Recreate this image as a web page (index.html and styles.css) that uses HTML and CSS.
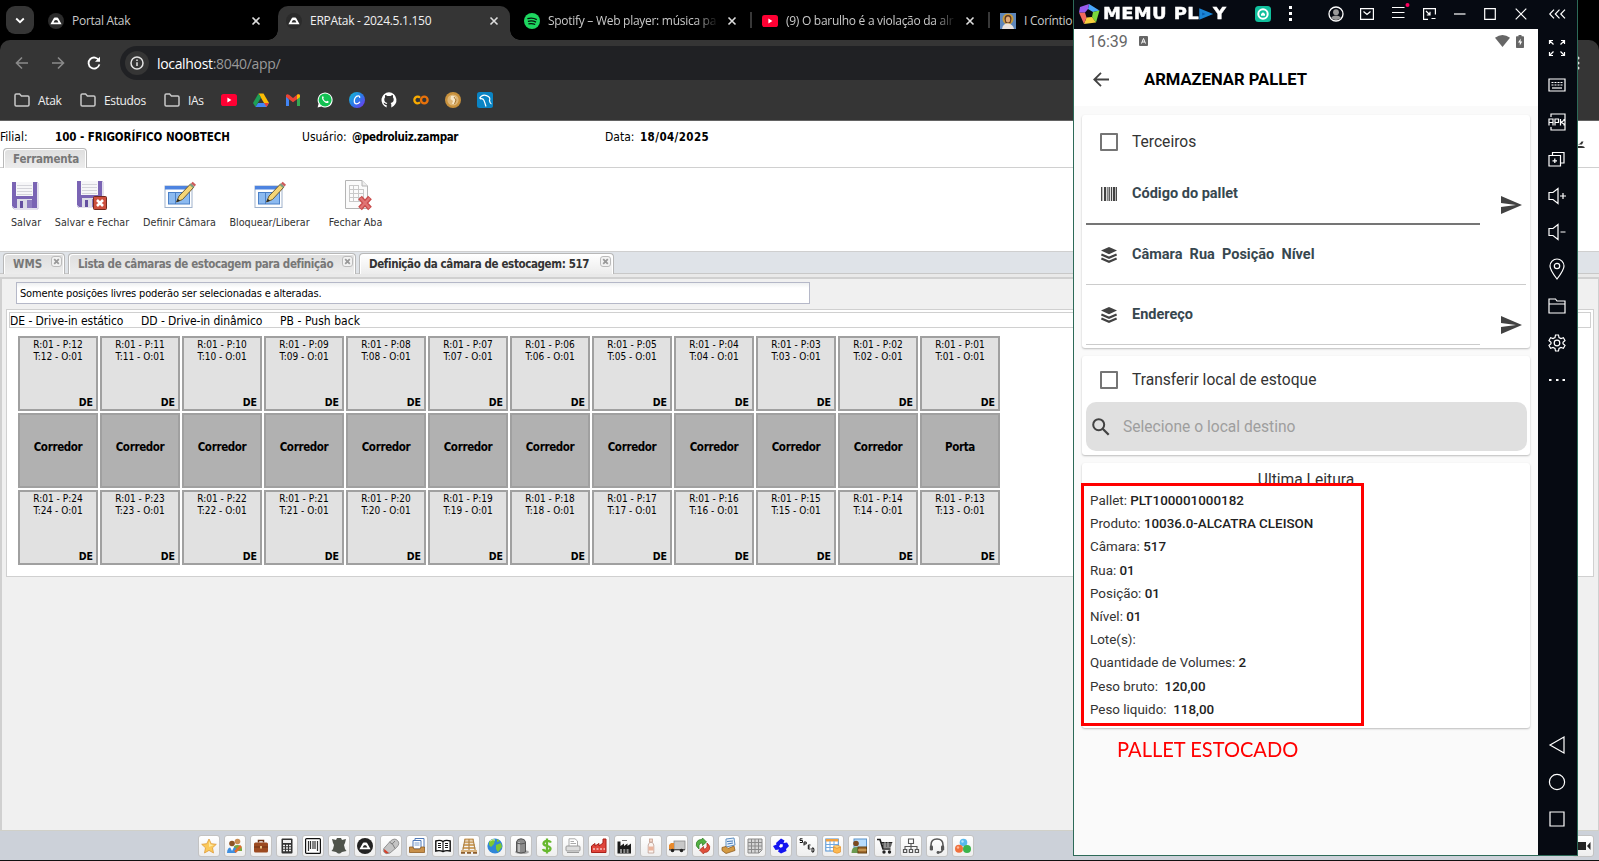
FILE: index.html
```html
<!DOCTYPE html>
<html lang="pt-BR">
<head>
<meta charset="utf-8">
<title>ERPAtak - 2024.5.1.150</title>
<link rel="stylesheet" href="styles.css">
</head>
<body>
<svg width="0" height="0" class="defs">
  <symbol id="x" viewBox="0 0 10 10"><path d="M1.5 1.5l7 7M8.5 1.5l-7 7" stroke="currentColor" stroke-width="1.6" fill="none"/></symbol>
  <symbol id="atak" viewBox="0 0 16 16"><circle cx="8" cy="8" r="8" fill="#2b2b2b"/><path d="M2.400 11.200 5.600 5.400Q6 4.600 7 4.600H9Q10 4.600 10.400 5.400L13.600 11.200Z" fill="#fff"/><path d="M5.600 9.400Q6.300 7 8 7T10.400 9.400Z" fill="#2b2b2b"/></symbol>
  <symbol id="folder" viewBox="0 0 16 14"><path d="M1 2.2Q1 1 2.2 1H5.6L7.4 3H13.8Q15 3 15 4.2V11.8Q15 13 13.8 13H2.2Q1 13 1 11.8Z" fill="none" stroke="#c7c7c7" stroke-width="1.5"/></symbol>
  <symbol id="yt" viewBox="0 0 16 12"><rect width="16" height="12" rx="2.6" fill="#ff0033"/><path d="M6.4 3.6v4.8L10.4 6Z" fill="#fff"/></symbol>
  <symbol id="tabx" viewBox="0 0 11 11"><rect x=".5" y=".5" width="10" height="10" rx="2.5" fill="#f2f2f2" stroke="#bbb"/><path d="M3.2 3.2l4.6 4.6M7.8 3.2L3.2 7.8" stroke="#999" stroke-width="1.8"/></symbol>
  <symbol id="floppy" viewBox="0 0 28 28"><path d="M1 1H26V27H3L1 25Z" fill="#7a64b4"/><path d="M26 1l1 1v26H3l-2-2" fill="none" stroke="#c9c3dc"/><rect x="5" y="1" width="17" height="14" fill="#f6f6f8"/><path d="M6 4.5H21M6 7.5H21M6 10.500H21M6 13.500H21" stroke="#d4d4da"/><rect x="6" y="18" width="15" height="9" fill="#dcdce6"/><rect x="9" y="20" width="3" height="7" fill="#6450a0"/><rect x="16" y="19" width="5" height="8" fill="#8d7cc0"/></symbol>
  <symbol id="edit" viewBox="0 0 32 28"><rect x="1" y="5" width="27" height="21.500" fill="#fff" stroke="#9fb2cc"/><rect x="1" y="5" width="27" height="3.500" fill="#4d83e0"/><rect x="4.500" y="11.500" width="21" height="11.500" fill="#8cbaf0" stroke="#4a80c8"/><path d="M11.500 11.500V23" stroke="#4a80c8"/><path d="M12.500 21 15 15 26.500 3 30 6 18.500 18.500Z" fill="#f6d575" stroke="#6d5a30"/><path d="M12.500 21 13.800 17.800 16 19.800Z" fill="#222"/><path d="M25.500 4 27 2.500 30.500 5.500 29 7Z" fill="#7f9f80"/><path d="M27 2.500 28.700 .8 32 3.800 30.500 5.500Z" fill="#cc5b5b"/></symbol>
  <symbol id="send" viewBox="0 0 21 18"><path d="M0 0 21 9 0 18V11L15 9 0 7Z" fill="#424242"/></symbol>
  <symbol id="layers" viewBox="0 0 16 16"><path d="M8 0 16 3.600 8 7.200 0 3.600Z" fill="#424242"/><path d="M.4 7.400 8 10.800 15.600 7.400M.4 11.400 8 14.800 15.600 11.400" stroke="#424242" stroke-width="2.200" fill="none"/></symbol>
</svg>

<div class="browser">
  <div class="tabstrip">
    <span class="tabmenu"><svg width="10" height="7" viewBox="0 0 10 7"><path d="M1.200 1.500 5 5.200 8.800 1.500" stroke="#fff" stroke-width="1.800" fill="none"/></svg></span>
    <div class="tab first"><svg width="16" height="16"><use href="#atak"/></svg><span class="ttl">Portal Atak</span><svg class="cx" width="10" height="10"><use href="#x"/></svg></div>
    <div class="tab active"><svg width="16" height="16"><use href="#atak"/></svg><span class="ttl">ERPAtak - 2024.5.1.150</span><svg class="cx" width="10" height="10"><use href="#x"/></svg></div>
    <div class="tab"><svg width="16" height="16" viewBox="0 0 16 16"><circle cx="8" cy="8" r="8" fill="#1ed760"/><path d="M3.400 5.700Q8.500 4.300 12.800 6.600M3.900 8.400Q8.200 7.200 12 9.100M4.400 10.900Q8 10 11.200 11.500" stroke="#04120a" stroke-width="1.300" fill="none"/></svg><span class="ttl fade">Spotify – Web player: música pa</span><svg class="cx" width="10" height="10"><use href="#x"/></svg></div>
    <i class="tsep"></i>
    <div class="tab"><svg width="16" height="12"><use href="#yt"/></svg><span class="ttl fade">(9) O barulho é a violação da alr</span><svg class="cx" width="10" height="10"><use href="#x"/></svg></div>
    <i class="tsep"></i>
    <div class="tab last"><svg width="16" height="16" viewBox="0 0 16 16"><rect width="16" height="16" fill="#5d86bb"/><circle cx="8" cy="6" r="5.500" fill="#c79a3c"/><path d="M4.500 6Q4.500 2 8 2T11.500 6L10.500 10H5.500Z" fill="#5c3620"/><ellipse cx="8" cy="6.500" rx="2.200" ry="3" fill="#e0aa78"/><path d="M2 16Q3 10 8 10.500T14 16Z" fill="#e9e1dc"/></svg><span class="ttl">I Coríntio</span></div>
  </div>
  <div class="navbar">
    <svg width="14" height="14" viewBox="0 0 14 14"><path d="M13 7H1.500M7 1.500 1.500 7 7 12.500" stroke="#8a8a8a" stroke-width="1.600" fill="none"/></svg>
    <svg width="14" height="14" viewBox="0 0 14 14"><path d="M1 7H12.500M7 1.500 12.500 7 7 12.500" stroke="#8a8a8a" stroke-width="1.600" fill="none"/></svg>
    <svg width="14" height="14" viewBox="0 0 14 14"><path d="M12 4.600A5.500 5.500 0 1 0 12.400 8.400" stroke="#fff" stroke-width="1.800" fill="none"/><path d="M13 .8V5.800H8Z" fill="#fff"/></svg>
    <div class="omni"><span class="info"><svg width="14" height="14" viewBox="0 0 14 14"><circle cx="7" cy="7" r="6" stroke="#e3e3e3" stroke-width="1.500" fill="none"/><path d="M7 6.200V10M7 3.600V5" stroke="#e3e3e3" stroke-width="1.500"/></svg></span><span class="url"><b>localhost</b>:8040/app/</span></div>
    <svg class="kebab" width="4" height="14" viewBox="0 0 4 14"><circle cx="2" cy="2" r="1.500" fill="#ddd"/><circle cx="2" cy="7" r="1.500" fill="#ddd"/><circle cx="2" cy="12" r="1.500" fill="#ddd"/></svg>
  </div>
  <div class="bookmarks">
    <span class="bm w1"><svg width="16" height="14"><use href="#folder"/></svg>Atak</span>
    <span class="bm w2"><svg width="16" height="14"><use href="#folder"/></svg>Estudos</span>
    <span class="bm w3"><svg width="16" height="14"><use href="#folder"/></svg>IAs</span>
    <span class="favs">
      <svg width="16" height="12"><use href="#yt"/></svg>
      <svg width="16" height="16" viewBox="0 0 16 16"><path d="M5.500 1.500H10.500L16 11H11Z" fill="#fbbc04"/><path d="M5.500 1.500 0 11 2.500 15 8 5.600Z" fill="#1e9e54"/><path d="M5 11H16L13.500 15H2.500Z" fill="#4285f4"/><path d="M11 11H16L13.500 15Z" fill="#ea4335"/></svg>
      <svg width="16" height="14" viewBox="0 0 16 14"><path d="M1 3V13H4V6.500Z" fill="#4285f4"/><path d="M15 3V13H12V6.500Z" fill="#34a853"/><path d="M1 4V2.200Q2 .5 4 1.800L8 5 12 1.800Q14 .5 15 2.200V4L8 9.300Z" fill="#ea4335"/><path d="M12 1.800Q14 .5 15 2.200V4L12 6.500Z" fill="#fbbc04"/></svg>
      <svg width="16" height="16" viewBox="0 0 16 16"><path d="M.6 15.600 1.600 11.800A7.500 7.500 0 1 1 4.400 14.600Z" fill="#fff"/><circle cx="8.100" cy="7.900" r="6.500" fill="#12c152"/><path d="M5.200 4.600Q6.200 3.800 6.700 5.400L6.300 6.700Q7 8.600 9.200 9.500L10.300 8.700Q12.200 9.300 11.600 10.200 10.500 12 7.800 10.200 4.300 7.700 5.200 4.600Z" fill="#fff"/></svg>
      <svg width="16" height="16" viewBox="0 0 16 16"><defs><linearGradient id="cv" x1="0" y1="0" x2="1" y2="1"><stop offset="0" stop-color="#12bfd0"/><stop offset=".5" stop-color="#2a7ae8"/><stop offset="1" stop-color="#7b2ff0"/></linearGradient></defs><circle cx="8" cy="8" r="8" fill="url(#cv)"/><path d="M10.600 5.800Q11 3.800 9.200 3.900C6.500 4 5.200 7 5.300 9.300 5.500 12.800 9.300 12.600 10.900 9.800" stroke="#fff" stroke-width="1.300" fill="none"/></svg>
      <svg width="16" height="16" viewBox="0 0 16 16"><path d="M8 .2A7.900 7.900 0 0 0 5.600 15.500V13Q3.800 13.400 3.200 12L2.400 10.800Q4 10.600 4.600 11.800L5.800 12Q5.800 11.200 6.400 10.900C4 10.600 3.300 9.400 3.300 7.200Q3.300 6 4.100 5.200 3.800 4.200 4.200 3.100 5 3 6.400 4H9.600Q11 3 11.800 3.100 12.200 4.200 11.900 5.200 12.700 6 12.700 7.200C12.700 9.400 12 10.600 9.600 10.900Q10.300 11.500 10.300 12.500V15.500A7.900 7.900 0 0 0 8 .2Z" fill="#fff"/></svg>
      <svg width="16" height="10" viewBox="0 0 16 10"><path d="M7 2.700A3.300 3.300 0 1 0 7 7.300" stroke="#f9ab00" stroke-width="2.300" fill="none"/><circle cx="11.300" cy="5" r="3.300" stroke="#e8710a" stroke-width="2.300" fill="none"/></svg>
      <svg width="16" height="16" viewBox="0 0 16 16"><circle cx="8" cy="8" r="8" fill="#c8913c"/><circle cx="8" cy="8" r="5.600" fill="#ddb678"/><path d="M6 4Q9 3 11 6L10 12H7L8 9 5.500 7Z" fill="#f6e6c6"/><path d="M9 5 11 8 9.500 12" stroke="#a3702a" fill="none"/></svg>
      <svg width="16" height="16" viewBox="0 0 16 16"><rect width="16" height="16" rx="2.500" fill="#0a84c4"/><path d="M2.500 6.500Q5 2 9.500 3.600T12.500 8.600Q13 11.500 14.500 12M3 6.800Q6 6 7 8.500T9 14.500" stroke="#fff" stroke-width="1.200" fill="none"/></svg>
    </span>
  </div>

  <div class="info-row"><span class="c1">Filial:</span><b class="c2">100 - FRIGORÍFICO NOOBTECH</b><span class="c3">Usuário:</span><b class="c4">@pedroluiz.zampar</b><span class="c5">Data:</span><b class="c6">18/04/2025</b>
    <svg class="edge" width="9" height="12" viewBox="0 0 9 12"><path d="M0 3.500Q3 3.500 4.500 .5H6.500L5 3.500ZM0 5H4.500Q8 5 8 8V12H4V9H0Z" fill="#333"/></svg></div>
  <div class="ribbon-tabs"><span class="etab">Ferramenta</span></div>
  <div class="ribbon">
    <div class="rb r1"><svg width="28" height="28"><use href="#floppy"/></svg><span>Salvar</span></div>
    <div class="rb r2"><svg width="32" height="30" viewBox="0 0 32 30"><use href="#floppy" width="28" height="28"/><rect x="17.500" y="16.500" width="13" height="13" rx="1" fill="#cd4f3d" stroke="#70281e"/><path d="M21 20l6 6M27 20l-6 6" stroke="#fff" stroke-width="2.600"/></svg><span>Salvar e Fechar</span></div>
    <div class="rb r3"><svg width="32" height="28"><use href="#edit"/></svg><span>Definir Câmara</span></div>
    <div class="rb r4"><svg width="32" height="28"><use href="#edit"/></svg><span>Bloquear/Liberar</span></div>
    <div class="rb r5"><svg width="28" height="30" viewBox="0 0 28 30"><path d="M1.500 .5H18L23.500 6V28.500H1.500Z" fill="#fbfbfb" stroke="#b4b4b4"/><path d="M18 .5V6H23.500" fill="#eee" stroke="#b4b4b4"/><path d="M5 5.500H15M5 9.500H20M5 13.500H20M5 17.500H20M5 21.500H16M5.500 5V22M9.500 5V22M14.500 5V22M19.500 9V18" stroke="#c9c9c9"/><path d="M16 17.500l10 11M26 17.500l-10 11" stroke="#c94c4c" stroke-width="5"/><path d="M16.500 18l9 10M25.500 18l-9 10" stroke="#e07575" stroke-width="2.400"/></svg><span>Fechar Aba</span></div>
  </div>
  <div class="page-tabs">
    <span class="etab t1">WMS<svg width="11" height="11"><use href="#tabx"/></svg></span>
    <span class="etab t2"><em>Lista de câmaras de estocagem para definição</em><svg width="11" height="11"><use href="#tabx"/></svg></span>
    <span class="etab t3"><em>Definição da câmara de estocagem: 517</em><svg width="11" height="11"><use href="#tabx"/></svg></span>
  </div>
  <div class="strip"></div>
  <div class="panel">
    <div class="field">Somente posições livres poderão ser selecionadas e alteradas.</div>
    <div class="sheet">
      <div class="legend"><span class="l1">DE - Drive-in estático</span><span class="l2">DD - Drive-in dinâmico</span><span class="l3">PB - Push back</span></div>
      <div class="grid">
        <div class="cell">R:01 - P:12<br>T:12 - O:01<b>DE</b></div><div class="cell">R:01 - P:11<br>T:11 - O:01<b>DE</b></div><div class="cell">R:01 - P:10<br>T:10 - O:01<b>DE</b></div><div class="cell">R:01 - P:09<br>T:09 - O:01<b>DE</b></div><div class="cell">R:01 - P:08<br>T:08 - O:01<b>DE</b></div><div class="cell">R:01 - P:07<br>T:07 - O:01<b>DE</b></div><div class="cell">R:01 - P:06<br>T:06 - O:01<b>DE</b></div><div class="cell">R:01 - P:05<br>T:05 - O:01<b>DE</b></div><div class="cell">R:01 - P:04<br>T:04 - O:01<b>DE</b></div><div class="cell">R:01 - P:03<br>T:03 - O:01<b>DE</b></div><div class="cell">R:01 - P:02<br>T:02 - O:01<b>DE</b></div><div class="cell">R:01 - P:01<br>T:01 - O:01<b>DE</b></div>
        <div class="aisle">Corredor</div><div class="aisle">Corredor</div><div class="aisle">Corredor</div><div class="aisle">Corredor</div><div class="aisle">Corredor</div><div class="aisle">Corredor</div><div class="aisle">Corredor</div><div class="aisle">Corredor</div><div class="aisle">Corredor</div><div class="aisle">Corredor</div><div class="aisle">Corredor</div><div class="aisle">Porta</div>
        <div class="cell">R:01 - P:24<br>T:24 - O:01<b>DE</b></div><div class="cell">R:01 - P:23<br>T:23 - O:01<b>DE</b></div><div class="cell">R:01 - P:22<br>T:22 - O:01<b>DE</b></div><div class="cell">R:01 - P:21<br>T:21 - O:01<b>DE</b></div><div class="cell">R:01 - P:20<br>T:20 - O:01<b>DE</b></div><div class="cell">R:01 - P:19<br>T:19 - O:01<b>DE</b></div><div class="cell">R:01 - P:18<br>T:18 - O:01<b>DE</b></div><div class="cell">R:01 - P:17<br>T:17 - O:01<b>DE</b></div><div class="cell">R:01 - P:16<br>T:16 - O:01<b>DE</b></div><div class="cell">R:01 - P:15<br>T:15 - O:01<b>DE</b></div><div class="cell">R:01 - P:14<br>T:14 - O:01<b>DE</b></div><div class="cell">R:01 - P:13<br>T:13 - O:01<b>DE</b></div>
      </div>
    </div>
  </div>
  <div class="dock">
    <i><svg viewBox="0 0 16 16"><path d="M8 1 10.200 5.700 15.300 6.300 11.500 9.800 12.500 15 8 12.400 3.500 15 4.500 9.800.7 6.300 5.800 5.700Z" fill="#fbc95a" stroke="#dd9a3a" stroke-width=".8"/><path d="M8 3 9.500 6.500 13 7 8 9Z" fill="#fde9a0"/></svg></i>
    <i><svg viewBox="0 0 16 16"><circle cx="10.500" cy="3.500" r="2.800" fill="#c98d52"/><path d="M6 12Q6 7 10.500 7T15 11V13H6Z" fill="#7aa83c"/><circle cx="5" cy="5.500" r="2.800" fill="#8c5324"/><path d="M0 15Q0 9 5 9T9 12V15Z" fill="#3f8fe0"/><path d="M3 9 5 13 7 9Z" fill="#fff"/><path d="M8 14 14 8" stroke="#e06b2c" stroke-width="2.500"/></svg></i>
    <i><svg viewBox="0 0 16 16"><path d="M5.500 4.500V2.500H10.500V4.500" stroke="#6e3013" fill="none" stroke-width="1.500"/><rect x="1" y="4.500" width="14" height="10" rx="1.500" fill="#9c4a20"/><path d="M1 9H15" stroke="#6e3013"/><rect x="7" y="8" width="2" height="2.500" fill="#e8c080"/></svg></i>
    <i><svg viewBox="0 0 16 16"><rect x="2.500" y=".5" width="11" height="15" rx="1" fill="#333"/><rect x="4" y="2" width="8" height="3" fill="#eee"/><path d="M4 7.500H12M4 10H12M4 12.500H12" stroke="#eee" stroke-width="1.500" stroke-dasharray="2 1"/></svg></i>
    <i><svg viewBox="0 0 16 16"><rect x=".6" y=".6" width="14.800" height="14.800" rx="1" fill="#fff" stroke="#111" stroke-width="1.200"/><path d="M3.500 3V13M5.500 3V11M8 3V11M10 3V11M12.500 3V13" stroke="#333" stroke-width="1.200"/></svg></i>
    <i><svg viewBox="0 0 16 16"><path d="M1 1 5 2 6 0H10L11 2 15 1 14 5 13 7 14 11 15.500 13 11 14 9 15.500H7L5 14 .5 13 2 11 3 7 2 5Z" fill="#50544c"/></svg></i>
    <i><svg viewBox="0 0 16 16"><circle cx="8" cy="8" r="8" fill="#222"/><path d="M2.400 11.200 5.600 5.400Q6 4.600 7 4.600H9Q10 4.600 10.400 5.400L13.600 11.200Z" fill="#fff"/><path d="M5.600 9.600Q6.300 7 8 7T10.400 9.600Z" fill="#222"/></svg></i>
    <i><svg viewBox="0 0 16 16"><path d="M.8 10.500 7.500 3Q11.500-.5 14.500 2.500T13.500 9.500L7 15Q3 16.500 1.300 14.500T.8 10.500Z" fill="#c4c4c4" stroke="#808080" stroke-width=".8"/><path d="M6.500 4.200Q10 5 12 10.500M9 6.200 12 3" stroke="#808080" fill="none"/><path d="M1.200 11 6 15 3 15.500 1 13.500Z" fill="#d4402a"/></svg></i>
    <i><svg viewBox="0 0 16 16"><path d="M6 .5H15V10H6Z" fill="#fff" stroke="#4f79b8"/><path d="M4 2.500H12V11H4Z" fill="#fff" stroke="#4f79b8"/><path d="M5.500 5H10.500M5.500 7H10.500" stroke="#7da0d0"/><path d="M.5 9H4L5 11H11L12 9H15.500V14.500H.5Z" fill="#c8904a" stroke="#8f5d22" stroke-width=".8"/></svg></i>
    <i><svg viewBox="0 0 16 16"><path d="M.8 3Q5 1.500 8 3.500 11 1.500 15.200 3V13Q11 12 8 13.500 5 12 .8 13Z" fill="#fff" stroke="#111" stroke-width="1.400"/><path d="M8 3.500V13.500M3 5.500H6M3 7.500H6M3 9.500H6M10 5.500H13M10 7.500H13M10 9.500H13" stroke="#111" stroke-width="1.100"/></svg></i>
    <i><svg viewBox="0 0 16 16"><path d="M3.500 1.500H12.500M3 4.300H13M2.300 7.100H13.700M1.700 9.900H14.300" stroke="#cfa468" stroke-width="2"/><path d="M4 1 1.500 14M12 1 14.500 14M8 1V14" stroke="#b08448" stroke-width="1.200"/><path d="M0 13H16" stroke="#d8b27c" stroke-width="2"/><path d="M0 14.800H4M6 14.800H10M12 14.800H16" stroke="#8a5c2c" stroke-width="1.800"/></svg></i>
    <i><svg viewBox="0 0 16 16"><circle cx="8" cy="8" r="7.600" fill="#2f86d8"/><path d="M2 4Q5 0 8 2L7 6 4 9 2 7ZM9 7 14 5 15 9 11 14 9 11ZM10 1 13 3 10 4Z" fill="#7dc832"/><path d="M3 3Q6 1 8 2" stroke="#d8f0a0" fill="none"/></svg></i>
    <i><svg viewBox="0 0 16 16"><ellipse cx="9" cy="14" rx="7" ry="2" fill="#aaa"/><path d="M3.500 4Q4 .8 8 .8T12.500 4V14Q8 16 3.500 14Z" fill="#8b8b8b" stroke="#555"/><path d="M6 4V14" stroke="#ccc" stroke-width="1.500"/><path d="M3.500 5Q8 7 12.500 5" stroke="#555" fill="none"/></svg></i>
    <i><svg viewBox="0 0 16 16"><path d="M12 4.500Q11 2.800 8 2.800T4.500 5.500C4.500 9 11.500 7 11.500 10.500Q11.500 13 8 13T4 11M8 .5V15.500" stroke="#66b82e" stroke-width="2.300" fill="none"/></svg></i>
    <i><svg viewBox="0 0 16 16"><path d="M4 8V.8H10L12.500 3V8" fill="#fff" stroke="#aaa"/><path d="M5.500 3.500H9M5.500 5.500H11" stroke="#aaa"/><rect x="1" y="8" width="14" height="5" rx="1" fill="#ddd" stroke="#999"/><path d="M2 14.500H14" stroke="#999"/></svg></i>
    <i><svg viewBox="0 0 16 16"><path d="M.5 14.500V8L4 5.500V8L8 5.500V8L12 5V1H15V14.500Z" fill="#e0443a" stroke="#a82018"/><path d="M2 11H14" stroke="#fff" stroke-dasharray="2 1.500"/></svg></i>
    <i><svg viewBox="0 0 16 16"><path d="M.5 3.500H3.500V8L7 5.500V8L10.500 5.500V8L14 5.500V15.500H.5Z" fill="#1a1a1a"/><path d="M3 12H13M3 14H13" stroke="#fff" stroke-dasharray="2 1.300"/><path d="M5 2.500H10" stroke="#777"/></svg></i>
    <i><svg viewBox="0 0 16 16"><rect x="6.500" y="1" width="3" height="3" fill="#f2d8cc" stroke="#c7a090" stroke-width=".8"/><path d="M6.500 4.500H9.500L10.800 7V15H5.200V7Z" fill="#fbf4f0" stroke="#bc9c90" stroke-width=".8"/><rect x="5.500" y="8.500" width="5" height="4" fill="#ebb49c"/></svg></i>
    <i><svg viewBox="0 0 16 16"><rect x="5" y="3" width="11" height="8.500" fill="#c8c8c8" stroke="#888" stroke-width=".8"/><path d="M0 11.500V7L2 5H5V11.500Z" fill="#e88a2c"/><path d="M0 11.800H16" stroke="#333"/><circle cx="3.500" cy="12.500" r="1.800" fill="#222"/><circle cx="12.500" cy="12.500" r="1.800" fill="#222"/></svg></i>
    <i><svg viewBox="0 0 16 16"><path d="M4 11Q0 8 1.500 4.500 3 1 7 1.500L7.500 0 11.500 4 7.500 7.500V5Q4.500 4.500 4 7.500Z" fill="#52b043" stroke="#2c7a24" stroke-width=".7"/><path d="M12 5Q16 8 14.500 11.500 13 15 9 14.500L8.500 16 4.500 12 8.500 8.500V11Q11.500 11.500 12 8.500Z" fill="#e0503c" stroke="#a82c1c" stroke-width=".7"/></svg></i>
    <i><svg viewBox="0 0 16 16"><path d="M5 1 13 0 14 7 5 9Z" fill="#e8f2fc" stroke="#5f8fc0"/><path d="M6 3.500 12 3M6.500 6 12 5" stroke="#4478b8"/><path d="M1 9.500 5 8.500 7 10.500 13 8 14 12.500 5 15.500 1 12.500Z" fill="#d49a42" stroke="#8f5d22" stroke-width=".8"/></svg></i>
    <i><svg viewBox="0 0 16 16"><path d="M1 1H15V12L12 15H1Z" fill="#d6d6d6" stroke="#8a8a8a"/><path d="M1 4.500H15M1 8H15M1 11.500H14M4.500 1V15M8 1V15M11.500 1V15" stroke="#8a8a8a"/></svg></i>
    <i><svg viewBox="0 0 16 16"><path d="M3 5 8 .5 11.500 2.500 10.500 5 14 4.500 16 8 13 11 13.500 13 8 15.500 5 13.500 6 11.500 2.500 12 0 8 3.500 6.500Z" fill="#1414f0"/><path d="M6 8.500 7.500 6 10 6.500 9.500 9 7.500 9.800Z" fill="#fff"/></svg></i>
    <i class="sped"><svg viewBox="0 0 16 16"><path d="M3.500 .8H1V2.500H3.500V4.500H.8M5 7.500V4H7.200V6H5M11.500 7H9.300V11H11.500M9.300 9H11M13 10V14H14.500Q15.500 12 14.500 10Z" stroke="#111" fill="none"/></svg></i>
    <i><svg viewBox="0 0 16 16"><rect x=".8" y="1" width="12.500" height="12" fill="#fff" stroke="#4f8fd0"/><rect x=".8" y="1" width="12.500" height="2.500" fill="#f0a040"/><path d="M1 6.500H13M1 9.500H13M5 3V13M9 3V13" stroke="#70a8e0"/><ellipse cx="12" cy="9" rx="3.500" ry="1.500" fill="#ffd880" stroke="#e09030" stroke-width=".7"/><path d="M8.500 9V14Q12 16.500 15.500 14V9Q12 11.500 8.500 9Z" fill="#fcb850" stroke="#e09030" stroke-width=".7"/></svg></i>
    <i><svg viewBox="0 0 16 16"><rect x="3" y="1" width="12.500" height="9" fill="#b8dcfa" stroke="#5a94cc"/><circle cx="5" cy="5.500" r="2.800" fill="#7b4a20"/><path d="M.5 15Q.5 9 5 9T8 12V15Z" fill="#6a9a50"/><rect x="7" y="9" width="8.500" height="6" fill="#a06a2c" stroke="#65400f"/><path d="M7 12H15.500" stroke="#e8c070"/></svg></i>
    <i><svg viewBox="0 0 16 16"><path d="M0 1.500H3L6 11H13.500" stroke="#222" stroke-width="1.700" fill="none"/><path d="M4 4H15.500L13.500 9.500H5.500Z" fill="#222"/><path d="M5 6H15M6 8H14M8 4V9M11 4V9" stroke="#ddd" stroke-width=".7"/><circle cx="7" cy="14" r="1.700" fill="#222"/><circle cx="12.500" cy="14" r="1.700" fill="#222"/></svg></i>
    <i><svg viewBox="0 0 16 16"><path d="M5.500 1H10.500V5.500H5.500ZM8 5.500V8.500M2 11V8.500H14V11M8 8.500V11" stroke="#555" fill="none" stroke-width="1.100"/><path d="M.5 11.500H3.700V14.500H.5ZM6.400 11.500H9.600V14.500H6.400ZM12.300 11.500H15.500V14.500H12.300Z" stroke="#555" fill="none" stroke-width="1.200"/></svg></i>
    <i><svg viewBox="0 0 16 16"><path d="M2 9V7Q2 1 8 1T14 7V9M13.500 12Q13 14.500 9 14.500" stroke="#555" stroke-width="1.500" fill="none"/><rect x=".8" y="7.500" width="3.200" height="5" rx="1.300" fill="#555"/><rect x="12" y="7.500" width="3.200" height="5" rx="1.300" fill="#555"/><circle cx="9" cy="14.500" r="1.400" fill="#555"/></svg></i>
    <i><svg viewBox="0 0 16 16"><circle cx="8.500" cy="4.500" r="3.800" fill="#58b8ec"/><circle cx="4" cy="10.800" r="4" fill="#f0703c"/><circle cx="12" cy="11" r="4" fill="#3cb44c"/><circle cx="7.500" cy="3.500" r="1.200" fill="#b4e2fa"/><circle cx="3" cy="9.500" r="1.200" fill="#fcb898"/></svg></i>
    <i class="cam"><svg viewBox="0 0 16 16"><rect x="0" y="4" width="11" height="8" fill="#222"/><path d="M12 8 15.500 4V12Z" fill="#222"/></svg></i>
  </div>
</div>

<div class="emu">
  <div class="emu-main">
    <div class="ebar">
      <svg class="logo" width="21" height="20" viewBox="0 0 21 20"><path d="M10 0 20.500 6.500 14 8 9 5Z" fill="#4aa8ff"/><path d="M20.500 6.500 17 18.500 13 13 14 8Z" fill="#7ad83c"/><path d="M17 18.500 5 20 7.500 13.500 13 13Z" fill="#f6cf3c"/><path d="M5 20 0 8.500 6 8.500 7.500 13.500Z" fill="#f0685c"/><path d="M0 8.500 1 3 10 0 9 5 6 8.500Z" fill="#9a5cf0"/></svg>
      <span class="brand"><span class="bt">MEMU PL</span><svg width="12" height="12" viewBox="0 0 12 12"><path d="M0 .2V11.800L12 6Z" fill="#1a86d8"/><path d="M2.500 4.600V7.400L5.500 6Z" fill="#0b5cae"/></svg><span class="by">Y</span></span>
      <svg class="g" width="16" height="16" viewBox="0 0 16 16"><rect width="16" height="16" rx="3.500" fill="#10bf9c"/><circle cx="8" cy="8" r="4.700" fill="none" stroke="#fff" stroke-width="2"/><path d="M6 8 8 6.200 10 8V9.800H6Z" fill="#fff"/></svg>
      <svg class="d" width="3" height="15" viewBox="0 0 3 15"><path d="M0 0H3V3H0ZM0 6H3V9H0ZM0 12H3V15H0Z" fill="#fff"/></svg>
      <svg class="p" width="16" height="16" viewBox="0 0 16 16"><circle cx="8" cy="8" r="7" fill="none" stroke="#fff" stroke-width="1.300"/><circle cx="8" cy="6.200" r="2.900" fill="#999"/><path d="M3.200 12Q4 9.500 8 9.500T12.800 12Q11 14 8 14T3.200 12Z" fill="#999"/></svg>
      <svg class="m" width="14" height="12" viewBox="0 0 14 12"><path d="M.6 .6H13.400V11.400H.6Z M3.500 3.500 7 6.500 10.500 3.500" fill="none" stroke="#fff" stroke-width="1.200"/></svg>
      <svg class="h" width="18" height="16" viewBox="0 0 18 16"><path d="M0 4.500H12.500M0 9.500H12.500M0 14.500H12.500" stroke="#fff" stroke-width="1.200"/><circle cx="15.500" cy="2" r="2" fill="#ff0060"/></svg>
      <svg class="s" width="13" height="12" viewBox="0 0 13 12"><path d="M5 11.400H.6V.6H12.400V6.500M3 3 7 7M7 3.800V7H3.800M8.500 10.500H12.500" fill="none" stroke="#fff" stroke-width="1.200"/></svg>
      <svg class="n" width="12" height="12" viewBox="0 0 12 12"><path d="M0 6H11.500" stroke="#fff" stroke-width="1.200"/></svg>
      <svg class="q" width="12" height="12" viewBox="0 0 12 12"><path d="M.7 .7H11.300V11.300H.7Z" fill="none" stroke="#fff" stroke-width="1.200"/></svg>
      <svg class="k" width="12" height="12" viewBox="0 0 12 12"><path d="M.7 .7 11.300 11.300M11.300 .7 .7 11.300" stroke="#fff" stroke-width="1.200"/></svg>
    </div>
    <div class="status"><span class="clock">16:39</span><svg width="9" height="10" viewBox="0 0 9 10"><rect width="9" height="10" rx="1" fill="#666"/><path d="M2.500 7.500 4.500 2.500 6.500 7.500M3.200 6H5.800" stroke="#fff" fill="none"/></svg>
      <svg class="wifi" width="15" height="12" viewBox="0 0 15 12"><path d="M0 2.800Q7.500-2.600 15 2.800L7.500 12Z" fill="#666"/></svg><svg width="8" height="13" viewBox="0 0 8 13"><path d="M0 2Q0 1.300 .8 1.300H2.500V0H5.500V1.300H7.200Q8 1.300 8 2V12.200Q8 13 7.200 13H.8Q0 13 0 12.200Z" fill="#666"/><path d="M4.800 3.500 2 7.500H3.800V10.500L6.200 6.500H4.500Z" fill="#fff"/></svg></div>
    <div class="apphead"><svg width="16" height="15" viewBox="0 0 16 15"><path d="M16 7.500H1.500M8 .8 1.300 7.500 8 14.200" stroke="#424242" stroke-width="1.800" fill="none"/></svg><span>ARMAZENAR PALLET</span></div>
    <div class="card c-a">
      <div class="chk"><i></i>Terceiros</div>
      <div class="row ra"><div class="inp dark"><svg width="16" height="14" viewBox="0 0 16 14"><path d="M.7 0V14M8.200 0V14M10.500 0V14M15.300 0V14" stroke="#424242" stroke-width="1.300"/><path d="M4 0V14M13 0V14" stroke="#424242" stroke-width="2.100"/><path d="M6.300 0V14" stroke="#424242" stroke-width=".8"/></svg><b>Código do pallet</b></div><svg class="snd" width="21" height="18"><use href="#send"/></svg></div>
      <div class="row rb2"><div class="inp"><svg width="16" height="16"><use href="#layers"/></svg><b class="wide">Câmara&nbsp; Rua&nbsp; Posição&nbsp; Nível</b></div></div>
      <div class="row ra"><div class="inp"><svg width="16" height="16"><use href="#layers"/></svg><b>Endereço</b></div><svg class="snd" width="21" height="18"><use href="#send"/></svg></div>
    </div>
    <div class="card c-b">
      <div class="chk"><i></i>Transferir local de estoque</div>
      <div class="search"><svg width="18" height="18" viewBox="0 0 18 18"><circle cx="6.700" cy="6.700" r="5.500" stroke="#424242" stroke-width="2" fill="none"/><path d="M10.700 10.700 16.700 16.700" stroke="#424242" stroke-width="2.300"/></svg>Selecione o local destino</div>
    </div>
    <div class="card c-c">
      <div class="last-title">Ultima Leitura</div>
      <div class="mark">
        <p>Pallet: <b>PLT100001000182</b></p><p>Produto: <b>10036.0-ALCATRA CLEISON</b></p><p>Câmara: <b>517</b></p><p>Rua: <b>01</b></p><p>Posição: <b>01</b></p><p>Nível: <b>01</b></p><p>Lote(s):</p><p>Quantidade de Volumes: <b>2</b></p><p>Peso bruto:&nbsp; <b>120,00</b></p><p>Peso liquido:&nbsp; <b>118,00</b></p>
      </div>
    </div>
    <div class="note">PALLET ESTOCADO</div>
  </div>
  <div class="side">
    <svg viewBox="0 0 24 24"><path d="M4.500 8V4.500H8M4.500 4.500 8.500 8.500M16 4.500H19.500V8M19.500 4.500 15.500 8.500M4.500 16V19.500H8M4.500 19.500 8.500 15.500M19.500 16V19.500H16M19.500 19.500 15.500 15.500" class="ln"/></svg>
    <svg viewBox="0 0 24 24"><path d="M4 6H20V18H4Z" class="ln"/><path d="M6.500 9.500H17.500M6.500 12H17.500" class="ln" stroke-dasharray="2 1"/><path d="M7 15H17" class="ln"/></svg>
    <svg viewBox="0 0 24 24"><path d="M6 7V4H20V20H6V17M4 15.500V9H8V15.500M4 12.500H8M10 15.500V9H13.500V12.500H10M15.500 9V15.500M19 9V10.500L16 12.200 19 14V15.500" class="ln"/></svg>
    <svg viewBox="0 0 24 24"><path d="M4 8.500H15.500V19H4ZM7.500 8V5.500H19V16H16M9.800 11.500V16M7.500 13.800H12" class="ln"/></svg>
    <svg viewBox="0 0 24 24"><path d="M4 8.500H8L13 4.500V19.500L8 15.500H4ZM15 12H21M18 9V15" class="ln"/></svg>
    <svg viewBox="0 0 24 24"><path d="M4 8.500H8L13 4.500V19.500L8 15.500H4ZM15.500 12H20.500" class="ln"/></svg>
    <svg viewBox="0 0 24 24"><path d="M12 22Q5 13 5 9A7 7 0 0 1 19 9Q19 13 12 22Z" class="ln"/><circle cx="12" cy="9" r="2.700" class="ln"/></svg>
    <svg viewBox="0 0 24 24"><path d="M4 19V5H10.500L12 7H20V19ZM4 10H20" class="ln"/></svg>
    <svg viewBox="0 0 24 24"><path d="M10.500 4H13.500L14 6.500 16 7.600 18.400 6.800 20 9.500 18 11.200V12.800L20 14.500 18.400 17.200 16 16.400 14 17.500 13.500 20H10.500L10 17.500 8 16.400 5.600 17.200 4 14.500 6 12.800V11.200L4 9.500 5.600 6.800 8 7.600 10 6.500Z" class="ln"/><circle cx="12" cy="12" r="2.800" class="ln"/></svg>
    <svg viewBox="0 0 24 24"><path d="M4 11H6.500V13H4ZM11 11H13.500V13H11ZM17.500 11H20V13H17.500Z" fill="#fff"/></svg>
    <svg class="nav1" viewBox="0 0 24 24"><path d="M5 12 19 4V20Z" class="ln"/></svg>
    <svg viewBox="0 0 24 24"><circle cx="12" cy="12" r="7.600" class="ln"/></svg>
    <svg viewBox="0 0 24 24"><path d="M5 5H19V19H5Z" class="ln"/></svg>
  </div>
  <svg class="collapse" width="17" height="10" viewBox="0 0 17 10"><path d="M5 .7 .8 5 5 9.300M10.500 .7 6.300 5 10.500 9.300M16 .7 11.800 5 16 9.300" stroke="#fff" stroke-width="1.200" fill="none"/></svg>
</div>
</body>
</html>
```

FILE: styles.css
```css
* { box-sizing: border-box; }
html, body { margin: 0; height: 861px; overflow: hidden; }
body { position: relative; width: 1599px; font-family: "DejaVu Sans Condensed", "DejaVu Sans", sans-serif; font-stretch: condensed; background: #fff; color: #000; white-space: nowrap; }
svg { flex: none; display: block; overflow: visible; }
.defs { position: absolute; }
em { font-style: normal; }
.browser { width: 1599px; height: 861px; display: flex; flex-direction: column; background: #f0f0f0; }

/* browser chrome */
.tabstrip { height: 40px; background: #000; display: flex; align-items: center; padding-left: 6px; font: 12px "Open Sans", sans-serif; letter-spacing: -0.28px; color: #c9c9c9; position: relative; z-index: 1; flex: none; }
.tabmenu { width: 28px; height: 28px; border-radius: 9px; background: #353535; display: flex; align-items: center; justify-content: center; flex: none; }
.tab { display: flex; align-items: center; width: 232px; height: 34px; margin-top: 6px; padding: 0 11px 5px 8px; flex: none; }
.tab.first { margin-left: 6px; width: 238px; padding-right: 17px; }
.tab .ttl { margin-left: 8px; width: 172px; margin-right: -6px; }
.tab .fade { -webkit-mask-image: linear-gradient(90deg, #000 86%, transparent 99%); mask-image: linear-gradient(90deg, #000 86%, transparent 99%); }
.cx { margin-left: auto; color: #ddd; }
.active { background: #353535; border-radius: 10px 10px 0 0; color: #f0f0f0; position: relative; }
.active::before, .active::after { content: ""; position: absolute; bottom: 0; width: 10px; height: 10px; }
.active::before { left: -10px; background: radial-gradient(circle at 0 0, transparent 9.500px, #353535 10px); }
.active::after { right: -10px; background: radial-gradient(circle at 100% 0, transparent 9.500px, #353535 10px); }
.active + .tab { margin-left: 6px; }
.tsep { width: 2px; height: 16px; background: #383838; flex: none; margin-left: 2px; }
.tsep + .tab { margin-left: 2px; }
.tab.last { width: 100px; }
.navbar { height: 46px; background: #353535; border-radius: 10px 10px 0 0; display: flex; align-items: center; padding-left: 15px; gap: 22px; box-shadow: 0 -10px 0 #000; }
.omni { margin-left: -3px; width: 1440px; height: 34px; border-radius: 17px; background: #202124; display: flex; align-items: center; padding-left: 5px; }
.info { width: 24px; height: 24px; border-radius: 12px; background: #353535; display: flex; align-items: center; justify-content: center; }
.url { margin-left: 8px; font: 14px "Open Sans", sans-serif; letter-spacing: -0.330px; color: #9a9a9a; }
.url b { font-weight: 400; color: #fff; }
.kebab { margin-left: -6px; }
.bookmarks { height: 35px; background: #353535; border-bottom: 1px solid #636363; display: flex; align-items: center; padding: 0 0 6px 14px; font: 12px "Open Sans", sans-serif; letter-spacing: -0.35px; color: #efefef; }
.bm { display: flex; align-items: center; gap: 8px; }
.w1 { width: 66px; } .w2 { width: 84px; } .w3 { width: 57px; }
.favs { display: flex; align-items: center; gap: 16px; }

/* application */
.info-row { height: 27px; background: #fff; display: flex; align-items: center; padding-top: 4px; font-size: 12px; flex: none; }
.info-row b { font-size: 11.500px; }
.c1 { width: 55px; } .c2 { width: 247px; letter-spacing: -0.06px; } .c3 { width: 50px; } .c4 { width: 253px; letter-spacing: -0.35px; } .c5 { width: 35px; } .c6 { width: 937px; letter-spacing: 0.4px; }
.edge { margin-top: 21px; }
.ribbon-tabs { height: 20px; background: #fff; border-bottom: 1px solid #d0d0d0; padding-left: 3px; display: flex; }
.etab { height: 21px; border: 1px solid #b8b8b8; border-bottom: 0; border-radius: 4px 4px 0 0; box-shadow: inset 1px 1px #fff, inset -1px 0 #fff; background: linear-gradient(#dedede, #ececec); display: flex; font-size: 11.500px; font-weight: 700; color: #777; }
.ribbon-tabs .etab { width: 84px; height: 20px; padding: 2px 0 0 9px; line-height: 17px; letter-spacing: -0.2px; }
.ribbon { height: 83px; background: #fff; display: flex; flex: none; }
.rb { display: flex; flex-direction: column; align-items: center; padding-top: 12px; font-size: 10.700px; color: #333; }
.rb svg { height: 30px; }
.rb span { line-height: 14px; margin-top: 6px; }
.r1 { width: 30px; margin-left: 11px; } .r2 { width: 74px; margin-left: 14px; } .r3 { width: 73px; margin-left: 14px; } .r4 { width: 81px; margin-left: 13px; } .r5 { width: 55px; margin-left: 18px; }
.r1 svg { transform: translateX(-1px); }
.r5 svg { transform: translateX(2px); }
.page-tabs { height: 23px; border-top: 1px solid #cfcfcf; border-bottom: 1px solid #c8c8c8; background: #dfe3e8; display: flex; gap: 3px; padding: 1px 0 0 3px; flex: none; }
.page-tabs .etab { line-height: 20px; height: 21px; padding-left: 9px; position: relative; }
.page-tabs em { letter-spacing: -0.37px; }
.page-tabs .etab svg { position: absolute; right: 2px; top: 2px; }
.t1 { width: 62px; } .t2 { width: 288px; } .page-tabs .t3 { width: 255px; color: #333; background: linear-gradient(#fff, #ececec); }
.strip { height: 5px; background: #e9e9e9; border-bottom: 2px solid #d0d0d0; flex: none; }
.panel { flex: 1; border-left: 2px solid #d0d0d0; border-right: 1px solid #d0d0d0; background: #f0f0f0; padding: 3px 4px 0 4px; }
.field { width: 794px; height: 22px; margin-left: 10px; border: 1px solid #b5b8c8; background: linear-gradient(#eef0f1, #fff 5px); font-size: 11px; letter-spacing: -0.17px; line-height: 21px; padding-left: 3px; }
.sheet { margin-top: 5px; height: 268px; width: 1588px; background: #fff; border: 1px solid #d0d0d0; padding: 2px; }
.legend { height: 16px; border: 1px solid #d0d0d0; font-size: 12px; letter-spacing: -0.06px; line-height: 17px; display: flex; }
.l1 { width: 131px; } .l2 { width: 139px; }
.l3 { letter-spacing: 0.05px; }
.grid { display: grid; grid-template-columns: repeat(12, 80px); grid-auto-rows: 75px; gap: 2px; margin: 8px 0 0 9px; }
.cell, .aisle { border: 2px solid #a0a0a0; background: #e1e1e1; font-size: 10px; line-height: 12px; text-align: center; padding-top: 1px; }
.cell b { display: block; text-align: right; padding-right: 3px; margin-top: 33px; font-size: 10.500px; }
.aisle { background: #b1b1b1; font-size: 11.500px; letter-spacing: -0.35px; font-weight: 700; line-height: 63px; }
.dock { height: 31px; background: #ccd1d9; border-top: 1px solid #d0d0c8; border-bottom: 1px solid #111; display: flex; gap: 4px; padding: 4px 0 0 198px; flex: none; }
.dock i { width: 22px; height: 22px; border: 1px solid #c3c3c3; border-radius: 3px; background: linear-gradient(#fff, #eee); display: flex; align-items: center; justify-content: center; flex: none; }
.dock svg { width: 16px; height: 16px; }
.dock .cam { margin-left: 594px; }

/* emulator window, floating above the browser */
.emu { position: absolute; z-index: 2; left: 1073px; top: 0; width: 505px; height: 856px; border: 1px solid #2d6a58; border-top: 0; display: flex; background: #060a12; font-family: Roboto, sans-serif; font-stretch: normal; }
.emu-main { width: 464px; background: #fafafa; }
.ebar { height: 29px; background: #060a12; display: flex; align-items: center; padding: 0 0 2px 5px; }
.brand { margin: 0 14px 0 3px; width: 110px; display: flex; align-items: center; font: 700 15.500px "DejaVu Sans", sans-serif; color: #fff; transform: scaleX(1.16); transform-origin: 0 50%; -webkit-text-stroke: .4px #fff; }
.bt { letter-spacing: 0.300px; }
.g { margin-left: 28px; } .d { margin-left: 18px; } .p { margin-left: 36px; } .m { margin-left: 16px; } .ebar .h { margin: -5px 0 0 18px; } .s { margin-left: 13px; } .n { margin-left: 18px; } .q { margin-left: 18px; } .k { margin-left: 19px; }
.status { height: 25px; background: #fff; display: flex; align-items: center; padding: 0 14px 1px; font-size: 16px; color: #666; }
.clock { width: 51px; }
.wifi { margin-left: auto; margin-right: 6px; }
.apphead { height: 52px; background: #fff; display: flex; align-items: center; padding: 0 0 1px 19px; font-size: 16.600px; font-weight: 700; }
.apphead span { margin-left: 35px; }
.card { width: 448px; margin-left: 8px; background: #fff; border-radius: 3px; box-shadow: 0 1px 2px rgba(0,0,0,.25); padding: 0 4px; }
.c-a { margin-top: 9px; height: 233px; }
.c-b { margin-top: 8px; height: 99px; }
.c-c { margin-top: 8px; height: 265px; padding: 0; }
.chk { height: 52px; display: flex; align-items: center; font-size: 15.600px; color: #333; padding: 2px 0 0 14px; }
.chk i { width: 18px; height: 18px; border: 2px solid #757575; border-radius: 1px; margin-right: 14px; }
.row { display: flex; height: 60px; }
.c-a .row:nth-child(2) { height: 58px; }
.inp { width: 394px; border-bottom: 1px solid #ccc; display: flex; align-items: center; padding: 1px 0 0 15px; font-size: 14.500px; color: #37474f; }
.inp.dark { border-bottom: 2px solid #757575; padding: 0 0 2px 15px; }
.rb2 .inp { width: 441px; }
.inp b { margin-left: 15px; }
.inp b { padding-bottom: 1px; }
.snd { margin: 31px 0 0 21px; }
.row:nth-child(2) .snd { margin-top: 29px; }
.search { width: 441px; height: 49px; margin-top: -6px; border-radius: 10px; background: #e0e0e0; display: flex; align-items: center; gap: 13px; padding-left: 6px; font-size: 15.600px; color: #9e9e9e; }
.c-b .chk { padding: 0 0 5px 14px; }
.last-title { text-align: center; font-size: 15.600px; color: #333; line-height: 18px; height: 20px; padding-top: 8px; }
.mark { position: relative; width: 283px; height: 243px; margin-left: -1px; border: 3px solid #f00; background: #fff; padding: 3px 0 0 6px; font-size: 13.400px; color: #333; }
.mark p { margin: 0; height: 23.200px; line-height: 23.200px; }
.mark b { font-weight: 500; color: #222; }
.note { margin: 8px 0 0 43px; font: 22px/26px Lato, sans-serif; color: #f00; transform: scaleX(.912); transform-origin: 0 0; }
.side { width: 39px; display: flex; flex-direction: column; align-items: center; padding: 36px 1px 0 0; }
.side svg { width: 24px; height: 24px; margin-bottom: 12.900px; }
.side .nav1 { margin-top: 328px; }
.ln { fill: none; stroke: #fff; stroke-width: 1.200; }
.collapse { position: absolute; left: 475px; top: 9px; }
```
